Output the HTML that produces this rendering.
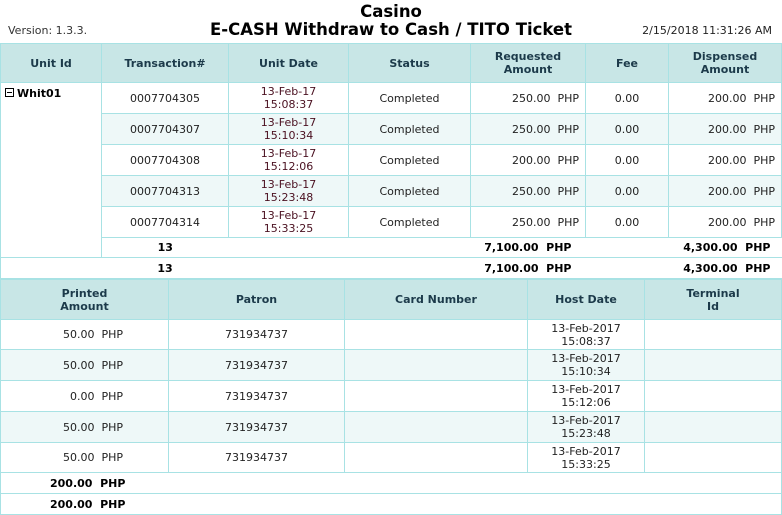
<!DOCTYPE html>
<html><head><meta charset="utf-8"><style>
body{margin:0;width:782px;height:515px;overflow:hidden;background:#fff;font-family:"DejaVu Sans",Verdana,sans-serif;font-size:11px;color:#222;position:relative}
.ver{position:absolute;left:8px;top:24px;font-size:11px;color:#333}
.dt{position:absolute;right:10px;top:24px;font-size:11px;color:#222}
.t1{position:absolute;left:0;top:3px;width:782px;text-align:center;font-weight:bold;font-size:16.5px;color:#000;line-height:18px}
table{position:absolute;left:0;border-collapse:collapse;table-layout:fixed;width:781px}
td,th{border:1px solid #a8e2e4;padding:0 6px;white-space:nowrap;overflow:hidden}
th{background:#c8e6e6;color:#1c3a4a;font-weight:bold;font-size:11px;line-height:13px}
.a td{background:#eef8f8}
.c{text-align:center}.r{text-align:right}
.d{color:#4a1020;line-height:13px;text-align:center}
.b{font-weight:bold;color:#000}
.nb{border-left:none;border-right:none}
.box{display:inline-block;width:7px;height:7px;border:1px solid #000;position:relative;margin-right:3px;vertical-align:0}
.box:after{content:"";position:absolute;left:1px;right:1px;top:3px;height:1px;background:#000}
</style></head><body>
<div class="t1">Casino<br>E-CASH Withdraw to Cash / TITO Ticket</div>
<div class="ver">Version: 1.3.3.</div>
<div class="dt">2/15/2018 11:31:26 AM</div>
<table style="top:43px">
<colgroup><col style="width:101px"><col style="width:127px"><col style="width:120px"><col style="width:122px"><col style="width:115px"><col style="width:83px"><col style="width:113px"></colgroup>
<tr style="height:39px"><th>Unit Id</th><th>Transaction#</th><th>Unit Date</th><th>Status</th><th>Requested<br>Amount</th><th>Fee</th><th>Dispensed<br>Amount</th></tr>
<tr style="height:31px"><td rowspan="6" style="vertical-align:top;padding:4px 4px" class="b"><span class="box"></span>Whit01</td><td class="c">0007704305</td><td class="d">13-Feb-17<br>15:08:37</td><td class="c">Completed</td><td class="r">250.00&nbsp; PHP</td><td class="c">0.00</td><td class="r">200.00&nbsp; PHP</td></tr>
<tr class="a" style="height:31px"><td class="c">0007704307</td><td class="d">13-Feb-17<br>15:10:34</td><td class="c">Completed</td><td class="r">250.00&nbsp; PHP</td><td class="c">0.00</td><td class="r">200.00&nbsp; PHP</td></tr>
<tr style="height:31px"><td class="c">0007704308</td><td class="d">13-Feb-17<br>15:12:06</td><td class="c">Completed</td><td class="r">200.00&nbsp; PHP</td><td class="c">0.00</td><td class="r">200.00&nbsp; PHP</td></tr>
<tr class="a" style="height:31px"><td class="c">0007704313</td><td class="d">13-Feb-17<br>15:23:48</td><td class="c">Completed</td><td class="r">250.00&nbsp; PHP</td><td class="c">0.00</td><td class="r">200.00&nbsp; PHP</td></tr>
<tr style="height:31px"><td class="c">0007704314</td><td class="d">13-Feb-17<br>15:33:25</td><td class="c">Completed</td><td class="r">250.00&nbsp; PHP</td><td class="c">0.00</td><td class="r">200.00&nbsp; PHP</td></tr>
<tr style="height:20px"><td class="c b" style="border-right:none">13</td><td colspan="3" class="r b nb" style="padding-right:14px">7,100.00&nbsp; PHP</td><td colspan="2" class="r b nb" style="padding-right:11px">4,300.00&nbsp; PHP</td></tr>
<tr style="height:21px"><td style="border-right:none"></td><td class="c b nb">13</td><td colspan="3" class="r b nb" style="padding-right:14px">7,100.00&nbsp; PHP</td><td colspan="2" class="r b nb" style="padding-right:11px">4,300.00&nbsp; PHP</td></tr>
</table>
<table style="top:279px">
<colgroup><col style="width:168px"><col style="width:176px"><col style="width:183px"><col style="width:117px"><col style="width:137px"></colgroup>
<tr style="height:40px"><th>Printed<br>Amount</th><th>Patron</th><th>Card Number</th><th>Host Date</th><th>Terminal<br>Id</th></tr>
<tr style="height:30px"><td class="r" style="padding-right:45px">50.00&nbsp; PHP</td><td class="c">731934737</td><td></td><td class="c" style="line-height:13px">13-Feb-2017<br>15:08:37</td><td></td></tr>
<tr class="a" style="height:31px"><td class="r" style="padding-right:45px">50.00&nbsp; PHP</td><td class="c">731934737</td><td></td><td class="c" style="line-height:13px">13-Feb-2017<br>15:10:34</td><td></td></tr>
<tr style="height:31px"><td class="r" style="padding-right:45px">0.00&nbsp; PHP</td><td class="c">731934737</td><td></td><td class="c" style="line-height:13px">13-Feb-2017<br>15:12:06</td><td></td></tr>
<tr class="a" style="height:31px"><td class="r" style="padding-right:45px">50.00&nbsp; PHP</td><td class="c">731934737</td><td></td><td class="c" style="line-height:13px">13-Feb-2017<br>15:23:48</td><td></td></tr>
<tr style="height:30px"><td class="r" style="padding-right:45px">50.00&nbsp; PHP</td><td class="c">731934737</td><td></td><td class="c" style="line-height:13px">13-Feb-2017<br>15:33:25</td><td></td></tr>
<tr style="height:21px"><td colspan="5" class="b" style="padding-left:49px">200.00&nbsp; PHP</td></tr>
<tr style="height:21px"><td colspan="5" class="b" style="padding-left:49px">200.00&nbsp; PHP</td></tr>
</table>
</body></html>
